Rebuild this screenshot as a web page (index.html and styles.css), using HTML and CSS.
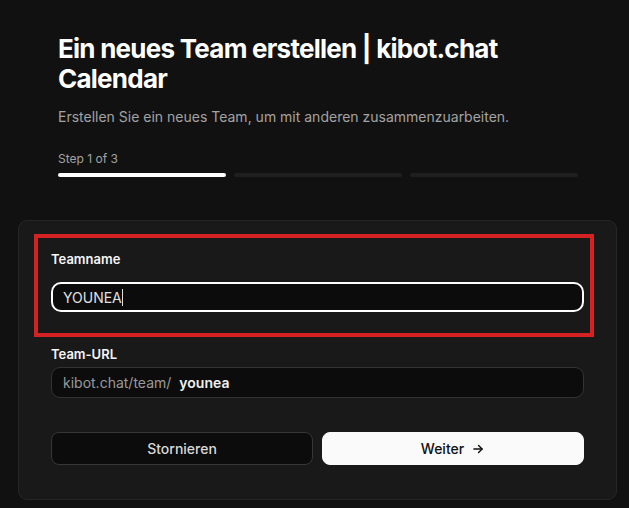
FILE: index.html
```html
<!DOCTYPE html>
<html lang="de">
<head>
<meta charset="utf-8">
<title>Ein neues Team erstellen | kibot.chat Calendar</title>
<link rel="stylesheet" href="styles.css">
</head>
<body>
<div class="page">
  <header class="header">
    <h1 class="title">Ein neues Team erstellen | kibot.chat Calendar</h1>
    <p class="subtitle">Erstellen Sie ein neues Team, um mit anderen zusammenzuarbeiten.</p>
    <div class="step">Step 1 of 3</div>
    <div class="progress">
      <span class="bar bar-active"></span>
      <span class="bar"></span>
      <span class="bar"></span>
    </div>
  </header>
  <main class="card">
    <div class="highlight"></div>
    <div class="field field-name">
      <label class="label">Teamname</label>
      <div class="input input-focus"><span class="value">YOUNEA</span><span class="caret"></span></div>
    </div>
    <div class="field field-url">
      <label class="label">Team-URL</label>
      <div class="input input-url"><span class="prefix">kibot.chat/team/</span><span class="slug">younea</span></div>
    </div>
    <div class="actions">
      <button class="btn btn-secondary">Stornieren</button>
      <button class="btn btn-primary">Weiter <svg class="arrow" width="14" height="14" viewBox="0 0 24 24" fill="none" stroke="currentColor" stroke-width="2.4" stroke-linecap="round" stroke-linejoin="round"><path d="M5 12h14"/><path d="M13 6l6 6-6 6"/></svg></button>
    </div>
  </main>
</div>
</body>
</html>
```
FILE: styles.css
```css
* { box-sizing: border-box; }
html, body { margin: 0; padding: 0; }
body {
  background: #111111;
  font-family: Inter, "Noto Sans", sans-serif;
  color: #fafafa;
  width: 629px;
  height: 508px;
  overflow: hidden;
}
.page {
  padding: 0 12px 0 18px;
}
.header {
  padding: 34px 39px 0 40px;
}
.title {
  margin: 0;
  font-family: Inter, sans-serif;
  font-weight: 700;
  font-size: 26px;
  line-height: 30px;
  letter-spacing: -0.75px;
  color: #ffffff;
}
.subtitle {
  margin: 13px 0 0;
  font-size: 14px;
  line-height: 20px;
  color: #a3a3a3;
}
.step {
  margin-top: 24px;
  font-size: 12px;
  line-height: 16px;
  color: #a3a3a3;
}
.progress {
  margin-top: 6px;
  display: grid;
  grid-template-columns: repeat(3, 1fr);
  gap: 8px;
}
.bar {
  height: 4px;
  border-radius: 2px;
  background: #1f1f1f;
}
.bar-active { background: #ffffff; }
.card {
  position: relative;
  margin-top: 43px;
  background: #191919;
  border: 1px solid #262626;
  border-radius: 9px;
  padding: 30px 32px 34px;
}
.highlight {
  position: absolute;
  left: 15px;
  top: 13px;
  width: 560px;
  height: 103px;
  border: 4px solid #d42222;
  pointer-events: none;
}
.label {
  display: block;
  font-size: 13px;
  line-height: 16px;
  font-weight: 600;
  color: #f5f5f5;
}
.input {
  display: flex;
  align-items: center;
  background: #0c0c0c;
  font-size: 14px;
}
.input-focus {
  margin-top: 15px;
  height: 30px;
  border: 2px solid #ffffff;
  border-radius: 10px;
  padding: 0 10px;
  color: #e0e0e0;
}
.caret {
  display: inline-block;
  width: 1px;
  height: 17px;
  background: #e0e0e0;
}
.field-url { margin-top: 34px; }
.input-url {
  margin-top: 5px;
  height: 31px;
  border: 1px solid #333333;
  border-radius: 9px;
  padding: 0 11px;
}
.prefix { color: #9a9a9a; }
.slug {
  margin-left: 8px;
  color: #f0f0f0;
  font-weight: 600;
}
.actions {
  margin-top: 34px;
  display: grid;
  grid-template-columns: 1fr 1fr;
  gap: 9px;
}
.btn {
  height: 33px;
  border-radius: 8px;
  font-family: Inter, sans-serif;
  font-size: 14px;
  font-weight: 500;
  display: flex;
  align-items: center;
  justify-content: center;
  gap: 7px;
  cursor: pointer;
}
.btn-secondary {
  background: #0c0c0c;
  border: 1px solid #363636;
  color: #d9d9d9;
}
.btn-primary {
  background: #fafafa;
  border: 1px solid #fafafa;
  color: #111111;
}
.arrow { display: block; }
```
